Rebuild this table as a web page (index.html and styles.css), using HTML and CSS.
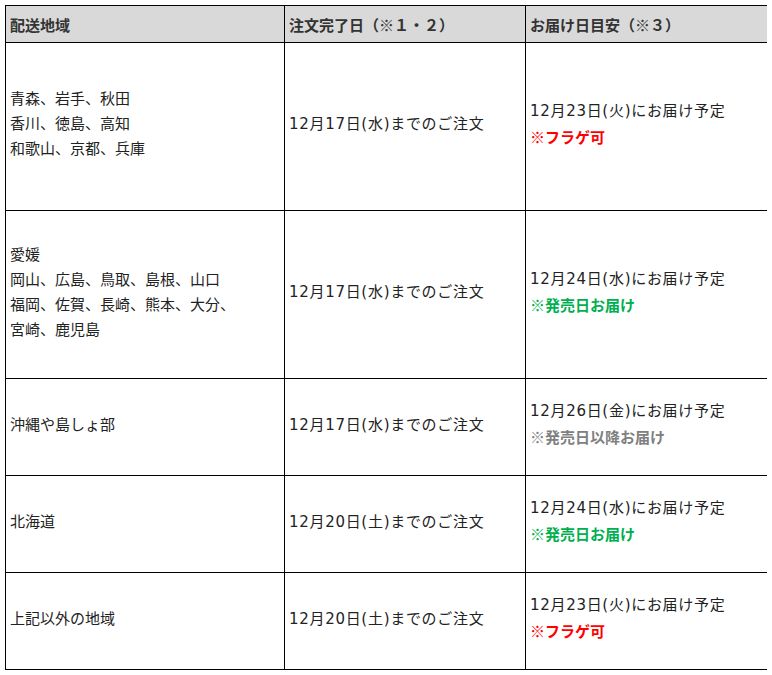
FILE: index.html
```html
<!DOCTYPE html>
<html lang="ja">
<head>
<meta charset="utf-8">
<link rel="stylesheet" href="styles.css">
</head>
<body>
<table class="ship">
  <colgroup>
    <col class="c1"><col class="c2"><col class="c3">
  </colgroup>
  <thead>
    <tr class="head">
      <th>配送地域</th>
      <th>注文完了日（※１・２）</th>
      <th>お届け日目安（※３）</th>
    </tr>
  </thead>
  <tbody>
    <tr class="tall">
      <td class="area">青森、岩手、秋田<br>香川、徳島、高知<br>和歌山、京都、兵庫</td>
      <td class="date">12月17日(水)までのご注文</td>
      <td class="date">12月23日(火)にお届け予定<br><span class="red">※フラゲ可</span></td>
    </tr>
    <tr class="tall">
      <td class="area">愛媛<br>岡山、広島、鳥取、島根、山口<br>福岡、佐賀、長崎、熊本、大分、<br>宮崎、鹿児島</td>
      <td class="date">12月17日(水)までのご注文</td>
      <td class="date">12月24日(水)にお届け予定<br><span class="green">※発売日お届け</span></td>
    </tr>
    <tr class="short">
      <td class="area">沖縄や島しょ部</td>
      <td class="date">12月17日(水)までのご注文</td>
      <td class="date">12月26日(金)にお届け予定<br><span class="gray">※発売日以降お届け</span></td>
    </tr>
    <tr class="short">
      <td class="area">北海道</td>
      <td class="date">12月20日(土)までのご注文</td>
      <td class="date">12月24日(水)にお届け予定<br><span class="green">※発売日お届け</span></td>
    </tr>
    <tr class="short">
      <td class="area">上記以外の地域</td>
      <td class="date">12月20日(土)までのご注文</td>
      <td class="date">12月23日(火)にお届け予定<br><span class="red">※フラゲ可</span></td>
    </tr>
  </tbody>
</table>
</body>
</html>
```
FILE: styles.css
```css
html, body {
  background: #ffffff;
}
body {
  margin: 5px;
  font-family: "Noto Sans CJK JP", "Noto Sans", sans-serif;
  font-size: 15px;
  color: #222222;
}
.ship {
  border-collapse: collapse;
  table-layout: fixed;
  width: 763px;
}
.c1 { width: 279px; }
.c2 { width: 241px; }
.c3 { width: 243px; }
.ship th,
.ship td {
  border: 1px solid #000000;
  padding: 0 3px 4px 4px;
  text-align: left;
  vertical-align: middle;
  line-height: 25px;
}
.ship th {
  background: #d9d9d9;
  font-weight: bold;
  font-size: 15px;
  height: 36px;
  padding-bottom: 0;
  color: #333333;
}
.tall td { height: 163px; }
.short td { height: 92px; }
.ship td.area { padding-bottom: 8px; }
.tall td.area { height: 159px; }
.short td.area { height: 88px; }
.ship td.date {
  font-family: "DejaVu Sans", "Noto Sans CJK JP", sans-serif;
  letter-spacing: 0.7px;
  white-space: nowrap;
}
.red,
.green,
.gray {
  font-family: "Noto Sans CJK JP", sans-serif;
  font-weight: bold;
  letter-spacing: 0;
}
.red { color: #ff0000; }
.green { color: #00b050; }
.gray { color: #808080; }
```
